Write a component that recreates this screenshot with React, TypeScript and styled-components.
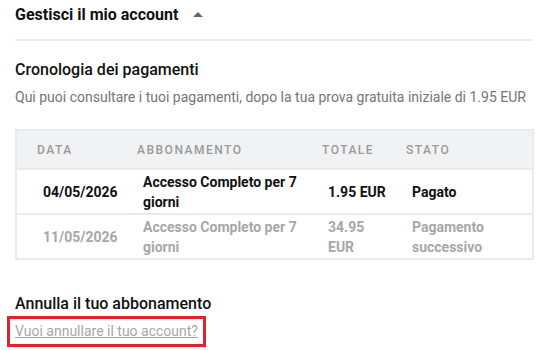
import { FC } from "react";
import styled, { createGlobalStyle } from "styled-components";

const GlobalStyle = createGlobalStyle`
  body {
    margin: 0;
    background: #ffffff;
    font-family: Roboto, "Liberation Sans", Arial, sans-serif;
    color: #111111;
  }
`;

const colors = {
  text: "#111111",
  muted: "#757575",
  faded: "#a7a7a7",
  border: "#e8eaed",
  headBg: "#f1f2f4",
  red: "#e3222b",
};

const Page = styled.div`
  width: 551px;
  height: 350px;
  padding: 0 19px 0 15px;
  box-sizing: border-box;
  overflow: hidden;
`;

const Toggle = styled.div`
  display: flex;
  align-items: center;
  gap: 15px;
  height: 30px;
  border-bottom: 2px solid #ebebeb;
  padding-bottom: 9px;
  h2 {
    margin: 0;
    font-size: 16px;
    font-weight: 700;
    line-height: 30px;
  }
`;

const Caret = styled.span`
  width: 0;
  height: 0;
  border-left: 5px solid transparent;
  border-right: 5px solid transparent;
  border-bottom: 5px solid #666666;
  margin-top: -1px;
`;

const Section = styled.section<{ $top: number }>`
  margin-top: ${(p) => p.$top}px;
`;

const SectionTitle = styled.h3`
  margin: 0;
  font-size: 16px;
  font-weight: 500;
  line-height: 22px;
`;

const Description = styled.p`
  margin: 6px 0 0;
  font-size: 14px;
  color: ${colors.muted};
  line-height: 20px;
`;

const Table = styled.table`
  margin-top: 22px;
  width: 517px;
  border-collapse: collapse;
  table-layout: fixed;
  border: 2px solid ${colors.border};
  font-size: 14px;
`;

const Th = styled.th<{ $w: number }>`
  box-sizing: border-box;
  width: ${(p) => p.$w}px;
  background: ${colors.headBg};
  text-align: left;
  font-size: 12px;
  font-weight: 500;
  letter-spacing: 1.5px;
  color: #9a9a9a;
  padding: 10px 4px 9px 20px;
  line-height: 18px;
  white-space: nowrap;
`;

const Td = styled.td<{ $faded?: boolean }>`
  box-sizing: border-box;
  border-top: 2px solid ${colors.border};
  padding: 2px 0 1px 26px;
  line-height: 20px;
  font-weight: 700;
  height: 43px;
  color: ${(p) => (p.$faded ? colors.faded : colors.text)};
`;

const Cancel = styled.div`
  margin-top: 33px;
`;

const LinkBox = styled.div`
  margin: 1px 0 0 -8px;
  display: inline-block;
  border: 3px solid ${colors.red};
  padding: 2px 5px 3px 5px;
`;

const CancelLink = styled.a`
  font-size: 14px;
  line-height: 20px;
  color: ${colors.faded};
  text-decoration: underline;
  cursor: pointer;
`;

const payments = [
  { date: "04/05/2026", plan: "Accesso Completo per 7 giorni", total: "1.95 EUR", status: "Pagato", faded: false },
  { date: "11/05/2026", plan: "Accesso Completo per 7 giorni", total: "34.95 EUR", status: "Pagamento successivo", faded: true },
];

const App: FC = () => {
  return (
    <Page>
      <GlobalStyle />
      <Toggle>
        <h2>Gestisci il mio account</h2>
        <Caret />
      </Toggle>
      <Section $top={18}>
        <SectionTitle>Cronologia dei pagamenti</SectionTitle>
        <Description>Qui puoi consultare i tuoi pagamenti, dopo la tua prova gratuita iniziale di 1.95 EUR</Description>
        <Table>
          <thead>
            <tr>
              <Th $w={101}>DATA</Th>
              <Th $w={185}>ABBONAMENTO</Th>
              <Th $w={84}>TOTALE</Th>
              <Th $w={147}>STATO</Th>
            </tr>
          </thead>
          <tbody>
            {payments.map((p) => (
              <tr key={p.date}>
                <Td $faded={p.faded}>{p.date}</Td>
                <Td $faded={p.faded}>{p.plan}</Td>
                <Td $faded={p.faded}>{p.total}</Td>
                <Td $faded={p.faded}>{p.status}</Td>
              </tr>
            ))}
          </tbody>
        </Table>
      </Section>
      <Cancel>
        <SectionTitle>Annulla il tuo abbonamento</SectionTitle>
        <LinkBox>
          <CancelLink>Vuoi annullare il tuo account?</CancelLink>
        </LinkBox>
      </Cancel>
    </Page>
  );
};

export default App;
